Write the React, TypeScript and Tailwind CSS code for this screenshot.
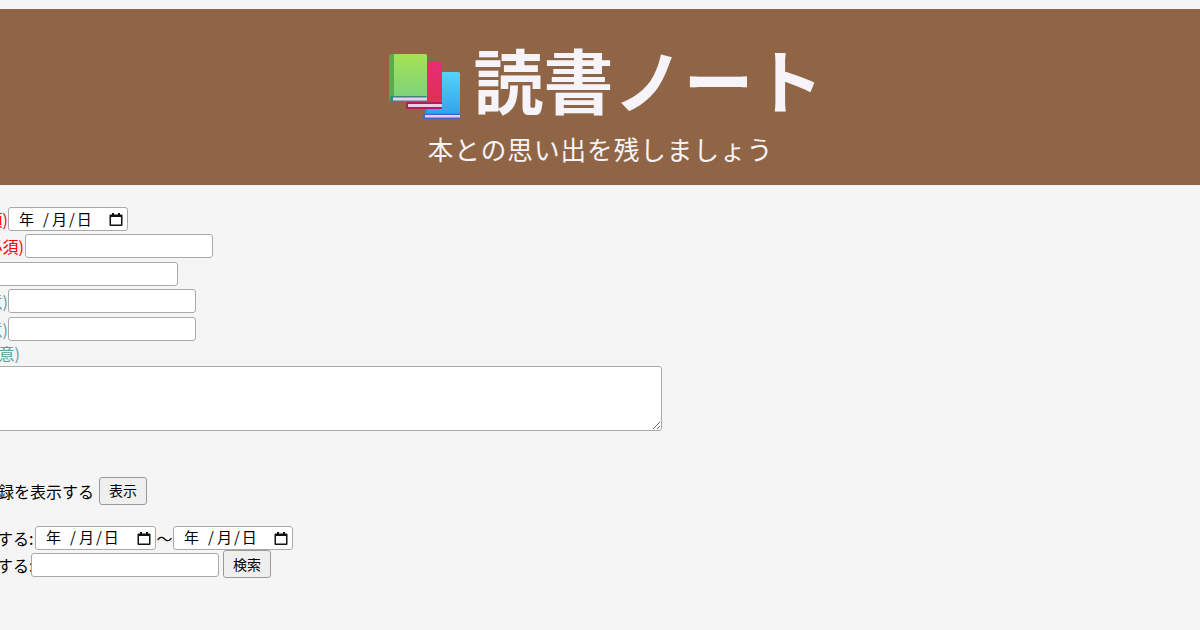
const font = "font-['Noto_Sans_CJK_JP','Liberation_Sans',sans-serif]";

const BooksIcon = () => (
  <svg width="71" height="65" viewBox="0 0 71 65" className="shrink-0 mt-[14px]">
    <defs>
      <linearGradient id="green" x1="0" y1="0" x2="0" y2="1">
        <stop offset="0" stopColor="#a5e352" />
        <stop offset="1" stopColor="#7fd27c" />
      </linearGradient>
      <linearGradient id="pink" x1="0" y1="0" x2="0" y2="1">
        <stop offset="0" stopColor="#e62c78" />
        <stop offset="1" stopColor="#df3050" />
      </linearGradient>
      <linearGradient id="blue" x1="0" y1="0" x2="0" y2="1">
        <stop offset="0" stopColor="#52d4fb" />
        <stop offset="1" stopColor="#33a4ee" />
      </linearGradient>
    </defs>
    {/* blue book */}
    <path d="M36 20 a2 2 0 0 1 2 -2 h31 a2 2 0 0 1 2 2 v42 h-33 a2 2 0 0 1 -2 -2 z" fill="#2f8fd8" />
    <rect x="38" y="18" width="33" height="41" rx="2" fill="url(#blue)" />
    <rect x="34" y="60" width="37" height="5" rx="1.5" fill="#3b67c4" />
    <rect x="36" y="61" width="35" height="2.5" fill="#e3cdf0" />
    {/* pink book */}
    <path d="M19 10 a2 2 0 0 1 2 -2 h30 a2 2 0 0 1 2 2 v40 h-34 z" fill="url(#pink)" />
    <rect x="17" y="48" width="36" height="7" rx="1.5" fill="#b5195f" />
    <rect x="19" y="50" width="34" height="3" fill="#e9cfe6" />
    {/* green book */}
    <rect x="0" y="0" width="38" height="48" rx="2.5" fill="#5aab4c" />
    <path d="M5 0 h31 a2 2 0 0 1 2 2 v41 h-33 z" fill="url(#green)" />
    <rect x="1" y="42" width="37" height="6" rx="1.5" fill="#3f8478" />
    <rect x="4" y="43.5" width="34" height="3" fill="#e6d2ee" />
  </svg>
);

const CalendarIcon = () => (
  <svg width="14" height="14" viewBox="0 0 14 14" className="block shrink-0">
    <path d="M3 1h2v1.5h4V1h2v1.5h1.5a1 1 0 0 1 1 1V13a1 1 0 0 1-1 1H1.5a1 1 0 0 1-1-1V3.5a1 1 0 0 1 1-1H3z" fill="#111" />
    <rect x="2" y="5" width="10" height="7.5" fill="#fff" />
  </svg>
);

const DateBox = ({ width }: { width: string }) => (
  <div className={`${width} h-6 shrink-0 flex items-center bg-white border border-[#a9a9a9] rounded-[3px] text-[15px] text-black pl-[10px] pr-[4px]`}>
    <span>年</span>
    <span className="ml-[9px]">/</span>
    <span className="ml-[3px]">月</span>
    <span className="ml-[2px]">/</span>
    <span className="ml-[2px]">日</span>
    <span className="ml-auto">
      <CalendarIcon />
    </span>
  </div>
);

const TextBox = ({ width = "w-[188px]" }: { width?: string }) => (
  <input type="text" className={`${width} h-6 shrink-0 bg-white border border-[#a9a9a9] rounded-[3px]`} />
);

const ActionButton = ({ label }: { label: string }) => (
  <button className="block w-12 h-7 shrink-0 bg-[#efefef] border border-[#9a9a9a] rounded-[3px] text-[14px] text-black">
    {label}
  </button>
);

const App = () => {
  return (
    <div className={`${font} w-[1200px] h-[630px] overflow-hidden bg-[#f5f5f5] text-base text-black pt-[9px]`}>
      {/* HEADER */}
      <header className="h-[176px] bg-[#8f6546] text-[#f6f4f9] flex flex-col items-center">
        <h1 className="h-[123px] flex items-center gap-[14px] text-[70px] font-bold leading-none pl-[12px] pt-[17px]">
          <BooksIcon />
          <span>読書ノート</span>
        </h1>
        <p className="text-[25.6px] leading-[34px] tracking-[1px] pl-[1px]">本との思い出を残しましょう</p>
      </header>

      {/* FORM (starts left of the visible area) */}
      <main className="ml-[-83px] w-[760px]">
        <form className="pt-[20px]">
          <div className="h-[27.5px] flex items-center text-[#ff0000]">
            <label className="w-[91px] shrink-0">読了日(必須)</label>
            <DateBox width="w-[120px]" />
          </div>
          <div className="h-[27.5px] flex items-center text-[#ff0000]">
            <label className="w-[108px] shrink-0">タイトル(必須)</label>
            <TextBox />
          </div>
          <div className="h-[27.5px] flex items-center text-[#5f9ea0]">
            <label className="w-[73px] shrink-0">著者(任意)</label>
            <TextBox />
          </div>
          <div className="h-[27.5px] flex items-center text-[#5f9ea0]">
            <label className="w-[91px] shrink-0">出版社(任意)</label>
            <TextBox />
          </div>
          <div className="h-[27.5px] flex items-center text-[#5f9ea0]">
            <label className="w-[91px] shrink-0">発売元(任意)</label>
            <TextBox />
          </div>
          <div className="h-[22px] flex items-start leading-[20px] text-[#5f9ea0]">
            <label className="w-[103px] text-right whitespace-nowrap">感想(任意)</label>
          </div>
          <textarea className="block w-[745px] h-[65px] mt-[1px] bg-white border border-[#a9a9a9] rounded-[3px] resize" />
        </form>

        <div className="mt-[45px] h-[30px] flex items-center gap-[5px]">
          <span className="w-[177px] text-right whitespace-nowrap">全記録を表示する</span>
          <ActionButton label="表示" />
        </div>

        <div className="mt-[20px] h-6 flex items-center">
          <span className="w-[115px] mr-[3px] text-right whitespace-nowrap">期間で検索する:</span>
          <DateBox width="w-[121px]" />
          <span className="w-[17px] text-center">〜</span>
          <DateBox width="w-[120px]" />
        </div>
        <div className="mt-[1px] h-[29px] flex items-center">
          <span className="w-[114px] pr-[1px] text-right whitespace-nowrap">題名で検索する:</span>
          <TextBox />
          <span className="ml-1 mb-[2px]">
            <ActionButton label="検索" />
          </span>
        </div>
      </main>
    </div>
  );
};

export default App;
